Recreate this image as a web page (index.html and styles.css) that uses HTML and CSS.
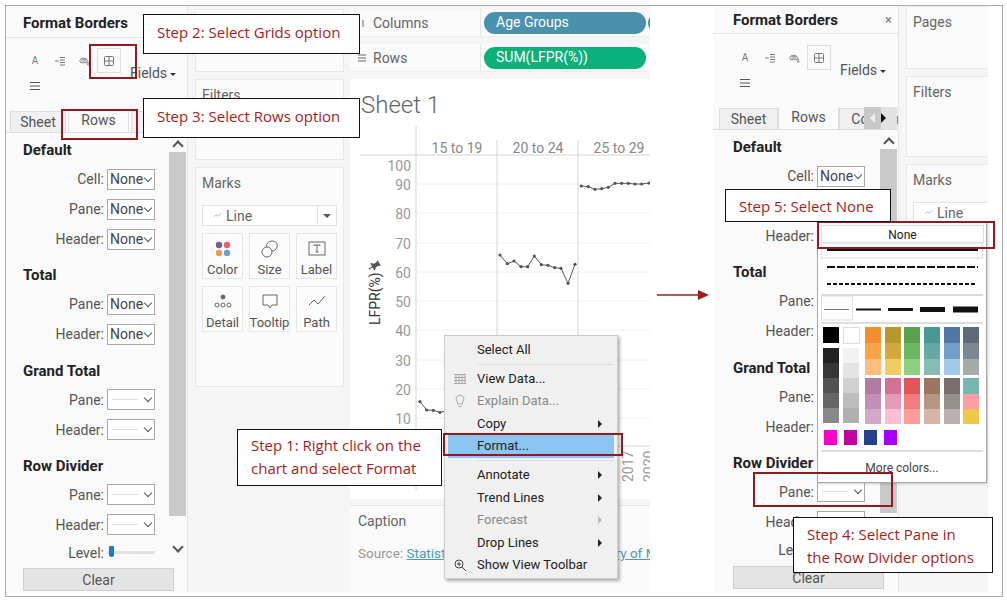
FILE: index.html
```html
<!DOCTYPE html>
<html lang="en">
<head>
  <meta charset="UTF-8">
  <meta name="viewport" content="width=device-width, initial-scale=1.0">
  <title>Format Borders steps</title>
  <link rel="stylesheet" href="styles.css">
</head>
<body>
  <div class="frame">

    <!-- left screenshot -->
    <div class="shot shot-left">
      <div class="fmt-panel">
        <div class="fmt-header"><h2>Format Borders</h2></div>
        <div class="fmt-tools">
          <span class="tool tool-a">A</span>
          <span class="tool"><svg viewBox="0 0 12 12"><path d="M1 6h4M6 2.500h5M6 5h5M6 7.500h5M6 10h5"></path></svg></span>
          <span class="tool"><svg viewBox="0 0 14 14"><path d="M2 6a5 4 0 0 1 9 0l1 3H3z"></path><path d="M4 5h6M4 7h6"></path><circle cx="12" cy="11" r="1"></circle></svg></span>
          <span class="tool tool-active"><svg viewBox="0 0 12 12"><rect x="1.500" y="1.500" width="9" height="9" rx="1"></rect><path d="M6 1.500v9M1.500 6h9"></path></svg></span>
          <span class="fields">Fields<i class="caret"></i></span>
          <span class="tool tool-lines"><svg viewBox="0 0 12 12"><path d="M1 2.500h10M1 6h10M1 9.500h10"></path></svg></span>
        </div>
        <div class="fmt-tabs">
          <span class="fmt-tab">Sheet</span>
          <span class="fmt-tab fmt-tab-active">Rows</span>
          <span class="fmt-tab fmt-tab-cols">Columns</span>
        </div>
        <div class="fmt-body">
          <div class="fmt-form">
            <h3>Default</h3>
            <div class="fmt-row"><label>Cell:</label><div class="sel">None</div></div>
            <div class="fmt-row"><label>Pane:</label><div class="sel">None</div></div>
            <div class="fmt-row"><label>Header:</label><div class="sel">None</div></div>
            <h3>Total</h3>
            <div class="fmt-row"><label>Pane:</label><div class="sel">None</div></div>
            <div class="fmt-row"><label>Header:</label><div class="sel">None</div></div>
            <h3>Grand Total</h3>
            <div class="fmt-row"><label>Pane:</label><div class="sel sel-line"></div></div>
            <div class="fmt-row"><label>Header:</label><div class="sel sel-line"></div></div>
            <h3>Row Divider</h3>
            <div class="fmt-row"><label>Pane:</label><div class="sel sel-line"></div></div>
            <div class="fmt-row"><label>Header:</label><div class="sel sel-line"></div></div>
            <div class="fmt-row fmt-row-level"><label>Level:</label><div class="slider"><i></i></div></div>
          </div>
          <div class="scrollbar">
            <span class="scroll-arrow scroll-up"></span>
            <div class="scroll-thumb"></div>
            <span class="scroll-arrow scroll-down"></span>
          </div>
        </div>
        <button class="clear-btn">Clear</button>
      </div>

      <div class="side">
        <div class="card card-pages"></div>
        <div class="card card-filters"><span class="card-title">Filters</span></div>
        <div class="card card-marks">
          <span class="card-title">Marks</span>
          <div class="marks-type">
            <svg viewBox="0 0 12 12"><path d="M1 8l3-3 3 2 4-4"></path></svg>Line<span class="marks-drop"><i></i></span>
          </div>
          <div class="marks-grid">
            <div class="mark-btn"><svg viewBox="0 0 20 20" class="dots"><circle cx="6" cy="6" r="3.200" fill="#6f5f96"></circle><circle cx="14" cy="6" r="3.200" fill="#e3636c"></circle><circle cx="6" cy="14" r="3.200" fill="#ef9b5a"></circle><circle cx="14" cy="14" r="3.200" fill="#6a9fd0"></circle></svg>Color</div>
            <div class="mark-btn"><svg viewBox="0 0 20 20"><circle cx="7" cy="13" r="5"></circle><path d="M6 8a6 6 0 0 1 6-6c4 0 6 3 5 6-1 3-3 4-5 4"></path></svg>Size</div>
            <div class="mark-btn"><svg viewBox="0 0 20 20"><rect x="2" y="3" width="16" height="13"></rect><path d="M7 7V6h6v1M10 6v7M8.500 13h3"></path></svg>Label</div>
            <div class="mark-btn"><svg viewBox="0 0 20 20"><circle cx="10" cy="5" r="2" fill="#666"></circle><circle cx="4" cy="13" r="2"></circle><circle cx="10" cy="13" r="2"></circle><circle cx="16" cy="13" r="2"></circle></svg>Detail</div>
            <div class="mark-btn"><svg viewBox="0 0 20 20"><path d="M3 3h14v10h-5l-2 3-2-3H3z"></path></svg>Tooltip</div>
            <div class="mark-btn"><svg viewBox="0 0 20 20"><path d="M2 13l5-5 4 4 7-8"></path></svg>Path</div>
          </div>
        </div>
      </div>

      <div class="main">
        <div class="shelf">
          <div class="shelf-label"><svg viewBox="0 0 10 10"><path d="M2.500 2v7M6 2v7"></path></svg>Columns</div>
          <span class="pill pill-dim">Age Groups</span><span class="pill pill-dim"></span>
        </div>
        <div class="shelf">
          <div class="shelf-label"><svg viewBox="0 0 10 10"><path d="M1 2h8M1 5h8M1 8h8"></path></svg>Rows</div>
          <span class="pill pill-measure">SUM(LFPR(%))</span>
        </div>
        <div class="sheet">
          <div class="sheet-title">Sheet 1</div>
          <svg class="chart" viewBox="350 126 300 373" width="300" height="373">
            <defs>
              <marker id="dot" viewBox="0 0 4 4" refX="2" refY="2" markerWidth="4" markerHeight="4" markerUnits="userSpaceOnUse">
                <circle cx="2" cy="2" r="1.600" fill="#555"></circle>
              </marker>
            </defs>
            <g class="grid-lines">
              <path d="M416 184H650M416 213H650M416 243H650M416 272H650M416 301H650M416 330H650M416 360H650M416 389H650M416 418H650"></path>
            </g>
            <g class="axis-lines">
              <path d="M360 155H650M416 126V490M497 140V446M578 140V446M416 446H650"></path>
            </g>
            <g class="col-text">
              <text x="457" y="153">15 to 19</text>
              <text x="538" y="153">20 to 24</text>
              <text x="619" y="153">25 to 29</text>
            </g>
            <g class="tick-text">
              <text x="411" y="171">100</text>
              <text x="411" y="190">90</text>
              <text x="411" y="219">80</text>
              <text x="411" y="249">70</text>
              <text x="411" y="278">60</text>
              <text x="411" y="307">50</text>
              <text x="411" y="336">40</text>
              <text x="411" y="366">30</text>
              <text x="411" y="395">20</text>
              <text x="411" y="424">10</text>
            </g>
            <text class="axis-title" transform="translate(380 325) rotate(-90)">LFPR(%)</text>
            <path class="pin" d="M371 260h6v1l-1 1v3l2 2v1h-3.500v4h-1v-4H370v-1l2-2v-3l-1-1z" transform="rotate(60 374 266)"></path>
            <g class="year-text">
              <text transform="translate(633 482) rotate(-90)">2017</text>
              <text transform="translate(654 482) rotate(-90)">2020</text>
            </g>
            <g class="series">
              <polyline points="420,401.700 426.700,410 433.300,410.300 440,412.300 447,411"></polyline>
              <polyline points="500,255 507.300,263.700 514,261 521,266.700 527.700,266.700 534.300,256 541.300,264.700 548,265.300 554.700,267.700 561,268.300 568,283.300 575,264.300"></polyline>
              <polyline points="581.300,186 588.300,186.700 595,189.300 601.700,188.700 608.300,187.300 615,183.300 621.700,183.300 628.300,183.300 635,184 641.700,184 649,183"></polyline>
            </g>
          </svg>
        </div>
        <div class="caption">
          <div class="caption-title">Caption</div>
          <div class="caption-text">Source: <a>Statistics Labor Department Ministry of Manpower</a></div>
        </div>
      </div>
    </div>

    <!-- right screenshot -->
    <div class="shot shot-right">
      <div class="fmt-panel">
        <div class="fmt-header"><h2>Format Borders</h2><span class="fmt-close">×</span></div>
        <div class="fmt-tools">
          <span class="tool tool-a">A</span>
          <span class="tool"><svg viewBox="0 0 12 12"><path d="M1 6h4M6 2.500h5M6 5h5M6 7.500h5M6 10h5"></path></svg></span>
          <span class="tool"><svg viewBox="0 0 14 14"><path d="M2 6a5 4 0 0 1 9 0l1 3H3z"></path><path d="M4 5h6M4 7h6"></path><circle cx="12" cy="11" r="1"></circle></svg></span>
          <span class="tool tool-active"><svg viewBox="0 0 12 12"><rect x="1.500" y="1.500" width="9" height="9" rx="1"></rect><path d="M6 1.500v9M1.500 6h9"></path></svg></span>
          <span class="fields">Fields<i class="caret"></i></span>
          <span class="tool tool-lines"><svg viewBox="0 0 12 12"><path d="M1 2.500h10M1 6h10M1 9.500h10"></path></svg></span>
        </div>
        <div class="fmt-tabs">
          <span class="fmt-tab">Sheet</span>
          <span class="fmt-tab fmt-tab-active">Rows</span>
          <span class="fmt-tab fmt-tab-cols">Columns</span>
          <span class="tab-scroller"><i class="tab-left"></i><i class="tab-right"></i></span>
        </div>
        <div class="fmt-body">
          <div class="fmt-form">
            <h3>Default</h3>
            <div class="fmt-row"><label>Cell:</label><div class="sel">None</div></div>
            <div class="fmt-row"><label>Pane:</label><div class="sel">None</div></div>
            <div class="fmt-row"><label>Header:</label><div class="sel">None</div></div>
            <h3>Total</h3>
            <div class="fmt-row"><label>Pane:</label><div class="sel">None</div></div>
            <div class="fmt-row"><label>Header:</label><div class="sel">None</div></div>
            <h3>Grand Total</h3>
            <div class="fmt-row"><label>Pane:</label><div class="sel sel-line"></div></div>
            <div class="fmt-row"><label>Header:</label><div class="sel sel-line"></div></div>
            <h3>Row Divider</h3>
            <div class="fmt-row"><label>Pane:</label><div class="sel sel-line"></div></div>
            <div class="fmt-row"><label>Header:</label><div class="sel sel-line"></div></div>
            <div class="fmt-row fmt-row-level"><label>Level:</label><div class="slider"><i></i></div></div>
          </div>
          <div class="scrollbar">
            <span class="scroll-arrow scroll-up"></span>
            <div class="scroll-thumb"></div>
            <span class="scroll-arrow scroll-down"></span>
          </div>
        </div>
        <button class="clear-btn">Clear</button>
      </div>

      <div class="side">
        <div class="card card-pages"><span class="card-title">Pages</span></div>
        <div class="card card-filters"><span class="card-title">Filters</span></div>
        <div class="card card-marks">
          <span class="card-title">Marks</span>
          <div class="marks-type">
            <svg viewBox="0 0 12 12"><path d="M1 8l3-3 3 2 4-4"></path></svg>Line
          </div>
        </div>
      </div>
    </div>

    <!-- line and colour popup on the right screenshot -->
    <div class="popup">
      <div class="popup-none">None</div>
      <svg class="popup-art" viewBox="817 243 169 209" width="169" height="209">
        <rect x="821.500" y="243" width="161" height="15" fill="#fff" stroke="#ddd"></rect>
        <path d="M827 250H978" stroke="#111" stroke-width="2"></path>
        <path d="M827 267H978" stroke="#111" stroke-width="2" stroke-dasharray="8 2"></path>
        <path d="M827 284H976" stroke="#111" stroke-width="2" stroke-dasharray="4 2"></path>
        <path d="M821 295H983M821 323H983M821 451H983" stroke="#bbb"></path>
        <rect x="821.500" y="296" width="31" height="24" fill="#fff" stroke="#ddd"></rect>
        <path d="M824 309.500H849" stroke="#777"></path>
        <path d="M856 309.500H881" stroke="#111" stroke-width="2"></path>
        <path d="M888 309.500H913" stroke="#111" stroke-width="3"></path>
        <path d="M920 309.500H945" stroke="#111" stroke-width="5"></path>
        <path d="M953 309.500H978" stroke="#111" stroke-width="6"></path>

        <rect x="823" y="327" width="16" height="16" fill="#000"></rect>
        <rect x="843.500" y="327.500" width="16" height="16" fill="#fff" stroke="#ddd"></rect>

        <rect x="823" y="348" width="16" height="15" fill="#222"></rect>
        <rect x="823" y="363" width="16" height="15" fill="#363636"></rect>
        <rect x="823" y="378" width="16" height="15" fill="#525252"></rect>
        <rect x="823" y="393" width="16" height="15" fill="#666"></rect>
        <rect x="823" y="408" width="16" height="15" fill="#888"></rect>
        <rect x="843" y="348" width="16" height="15" fill="#f2f2f2"></rect>
        <rect x="843" y="363" width="16" height="15" fill="#e3e3e3"></rect>
        <rect x="843" y="378" width="16" height="15" fill="#d0d0d0"></rect>
        <rect x="843" y="393" width="16" height="15" fill="#bdbdbd"></rect>
        <rect x="843" y="408" width="16" height="15" fill="#b0b0b0"></rect>

        <rect x="865" y="327" width="16" height="16" fill="#f28e2b"></rect>
        <rect x="865" y="343" width="16" height="16" fill="#f9a44a"></rect>
        <rect x="865" y="359" width="16" height="16" fill="#ffbe7d"></rect>
        <rect x="885" y="327" width="16" height="16" fill="#b6992d"></rect>
        <rect x="885" y="343" width="16" height="16" fill="#d1a93c"></rect>
        <rect x="885" y="359" width="16" height="16" fill="#f1ce63"></rect>
        <rect x="904" y="327" width="16" height="16" fill="#59a14f"></rect>
        <rect x="904" y="343" width="16" height="16" fill="#6cb663"></rect>
        <rect x="904" y="359" width="16" height="16" fill="#8cd17d"></rect>
        <rect x="924" y="327" width="16" height="16" fill="#499894"></rect>
        <rect x="924" y="343" width="16" height="16" fill="#64a9a4"></rect>
        <rect x="924" y="359" width="16" height="16" fill="#86bcb6"></rect>
        <rect x="944" y="327" width="16" height="16" fill="#4e79a7"></rect>
        <rect x="944" y="343" width="16" height="16" fill="#729fc8"></rect>
        <rect x="944" y="359" width="16" height="16" fill="#a0cbe8"></rect>
        <rect x="963" y="327" width="16" height="16" fill="#5d6b78"></rect>
        <rect x="963" y="343" width="16" height="16" fill="#7b8791"></rect>
        <rect x="963" y="359" width="16" height="16" fill="#a5aaab"></rect>

        <rect x="865" y="378" width="16" height="16" fill="#b07aa1"></rect>
        <rect x="865" y="394" width="16" height="15" fill="#c28fb8"></rect>
        <rect x="865" y="409" width="16" height="15" fill="#d4a6c8"></rect>
        <rect x="885" y="378" width="16" height="16" fill="#d37295"></rect>
        <rect x="885" y="394" width="16" height="15" fill="#e79ab4"></rect>
        <rect x="885" y="409" width="16" height="15" fill="#fabfd2"></rect>
        <rect x="904" y="378" width="16" height="16" fill="#e15759"></rect>
        <rect x="904" y="394" width="16" height="15" fill="#f47b7b"></rect>
        <rect x="904" y="409" width="16" height="15" fill="#ff9d9a"></rect>
        <rect x="924" y="378" width="16" height="16" fill="#9d7660"></rect>
        <rect x="924" y="394" width="16" height="15" fill="#b59583"></rect>
        <rect x="924" y="409" width="16" height="15" fill="#d7b5a6"></rect>
        <rect x="944" y="378" width="16" height="16" fill="#79706e"></rect>
        <rect x="944" y="394" width="16" height="15" fill="#95908c"></rect>
        <rect x="944" y="409" width="16" height="15" fill="#bab0ac"></rect>
        <rect x="963" y="378" width="16" height="16" fill="#76b7b2"></rect>
        <rect x="963" y="394" width="16" height="15" fill="#ff9da7"></rect>
        <rect x="963" y="409" width="16" height="15" fill="#edc948"></rect>

        <rect x="824" y="430" width="13" height="15" fill="#ff00c8"></rect>
        <rect x="844" y="430" width="13" height="15" fill="#c2009b"></rect>
        <rect x="864" y="430" width="13" height="15" fill="#27408b"></rect>
        <rect x="884" y="430" width="13" height="15" fill="#a800ff"></rect>
      </svg>
      <div class="popup-more">More colors...</div>
    </div>

    <!-- context menu on the chart -->
    <div class="menu">
      <div class="menu-item">Select All</div>
      <div class="menu-sep"></div>
      <div class="menu-item"><svg class="menu-icon" viewBox="0 0 14 12"><path d="M1 1.500h12M1 4.500h12M1 7.500h12M1 10.500h12M3 1v10M6 1v10M9 1v10M12 1v10"></path></svg>View Data...</div>
      <div class="menu-item menu-off"><svg class="menu-icon" viewBox="0 0 14 14"><path d="M7 1a4 4 0 0 0-2.500 7v2h5V8A4 4 0 0 0 7 1zM5.500 12.500h3"></path></svg>Explain Data...</div>
      <div class="menu-item menu-more">Copy</div>
      <div class="menu-item menu-hot">Format...</div>
      <div class="menu-sep"></div>
      <div class="menu-item menu-more">Annotate</div>
      <div class="menu-item menu-more">Trend Lines</div>
      <div class="menu-item menu-off menu-more">Forecast</div>
      <div class="menu-item menu-more">Drop Lines</div>
      <div class="menu-item"><svg class="menu-icon menu-icon-dark" viewBox="0 0 14 14"><circle cx="6" cy="6" r="4"></circle><path d="M9 9l4 4M4 6h4M6 4v4"></path></svg>Show View Toolbar</div>
    </div>

    <!-- red highlight boxes -->
    <div class="mark mark-grids"></div>
    <div class="mark mark-rows"></div>
    <div class="mark mark-format"></div>
    <div class="mark mark-none"></div>
    <div class="mark mark-pane"></div>

    <!-- step callouts -->
    <div class="callout step-2">Step 2: Select Grids option</div>
    <div class="callout step-3">Step 3: Select Rows option</div>
    <div class="callout step-1">Step 1: Right click on the<br>chart and select Format</div>
    <div class="callout step-5">Step 5: Select None</div>
    <div class="callout step-4">Step 4: Select Pane in<br>the Row Divider options</div>

    <svg class="next-arrow" viewBox="0 0 52 12"><path d="M0 6H42" stroke="#a01c1c" stroke-width="1.500"></path><path d="M41 1l11 5-11 5z" fill="#a01c1c"></path></svg>
  </div>
</body>
</html>
```

FILE: styles.css
```css
* {
  margin: 0;
  padding: 0;
  box-sizing: border-box;
}

body {
  font-family: Roboto, "Liberation Sans", sans-serif;
  font-size: 14px;
  color: #555;
  background: #fff;
}

.frame {
  position: relative;
  display: flex;
  align-items: flex-start;
  width: 998px;
  height: 592px;
  margin: 5px 0 0 5px;
  border: 1px solid #aaa;
  overflow: hidden;
}

.shot {
  display: flex;
  height: 586px;
  background: #f5f5f5;
  overflow: hidden;
}

.shot-left {
  width: 644px;
}

.shot-right {
  width: 275px;
  margin-left: 63px;
}

/* format panel */
.fmt-panel {
  flex: none;
  width: 182px;
  height: 100%;
  background: #fafafa;
  border-right: 1px solid #e6e6e6;
}

.shot-right .fmt-panel {
  width: 186px;
}

.fmt-header {
  display: flex;
  align-items: center;
  justify-content: space-between;
  height: 32px;
  padding: 2px 6px 0 17px;
  border-bottom: 1px solid #e6e6e6;
}

.shot-right .fmt-header {
  height: 28px;
  padding-left: 20px;
  padding-top: 0;
}

.fmt-header h2 {
  font-size: 15px;
  font-weight: 700;
  color: #222;
}

.fmt-close {
  font-size: 13px;
  color: #777;
}

.fmt-tools {
  display: grid;
  grid-template-columns: repeat(4, 24.5px) auto;
  grid-template-rows: 25px 25px;
  justify-content: start;
  height: 72px;
  padding: 10px 0 0 17px;
}

.shot-right .fmt-tools {
  height: 73px;
  padding: 11px 0 0 20px;
}

.tool {
  display: flex;
  align-items: center;
  justify-content: center;
  width: 24px;
  height: 25px;
}

.tool svg {
  width: 12px;
  height: 12px;
  fill: none;
  stroke: #777;
  stroke-width: 1;
}

.tool-a {
  font-size: 10px;
  color: #777;
}

.tool-active {
  border: 1px solid #ddd;
}

.tool-lines {
  grid-row: 2;
  grid-column: 1;
}

.tool-lines svg {
  stroke: #555;
}

.fields {
  grid-row: 1 / 3;
  grid-column: 5;
  align-self: center;
  margin-left: 9px;
  color: #555;
  white-space: nowrap;
}

.caret {
  display: inline-block;
  margin-left: 3px;
  vertical-align: 2px;
  border: 3px solid transparent;
  border-top: 3px solid #333;
  border-bottom: 0;
}

.fmt-tabs {
  position: relative;
  display: flex;
  align-items: flex-end;
  height: 23px;
  padding-left: 4px;
  border-bottom: 1px solid #ddd;
  overflow: hidden;
}

.shot-right .fmt-tabs {
  padding-left: 6px;
}

.fmt-tab {
  flex: none;
  width: 56px;
  height: 21px;
  margin-right: 2px;
  text-align: center;
  line-height: 21px;
  background: #f0f0f0;
  border: 1px solid #ddd;
  border-bottom: 0;
}

.shot-right .fmt-tab {
  width: 59px;
  margin-right: 0;
}

.fmt-tab-active,
.shot-right .fmt-tab-active {
  width: 61px;
  height: 23px;
  line-height: 21px;
  background: #fafafa;
  border-bottom: 1px solid #fafafa;
}

.fmt-tab-cols,
.shot-right .fmt-tab-cols {
  width: 80px;
}

.tab-scroller {
  position: absolute;
  right: 1px;
  top: 0;
  display: flex;
  width: 33px;
  height: 22px;
  background: linear-gradient(to right, #c8c8c8 17px, #e2e2e2 17px);
}

.tab-scroller i {
  width: 0;
  height: 0;
  margin: 6px 0 0 6px;
  border: 5px solid transparent;
}

.tab-left {
  border-right-color: #eee !important;
  border-left-width: 0 !important;
}

.tab-right {
  border-left-color: #111 !important;
  border-right-width: 0 !important;
}

.fmt-body {
  display: flex;
  justify-content: space-between;
  height: 425px;
  padding: 2px 0 0 17px;
}

.shot-right .fmt-body {
  padding-left: 20px;
}

.fmt-form {
  padding-top: 5px;
}

.fmt-form h3 {
  height: 20px;
  margin: 11.250px 0 4px;
  font-size: 15px;
  font-weight: 700;
  line-height: 20px;
  color: #222;
}

.fmt-form h3:first-child {
  margin-top: 0;
}

.fmt-row {
  display: flex;
  align-items: center;
  gap: 3px;
  height: 30px;
}

.fmt-row label {
  width: 81px;
  text-align: right;
}

.fmt-row-level {
  height: 26px;
}

.sel {
  position: relative;
  width: 48px;
  height: 21px;
  padding-left: 2px;
  line-height: 19px;
  color: #444;
  background: #fff;
  border: 1px solid #a9a9a9;
}

.sel::after {
  content: "";
  position: absolute;
  right: 3px;
  top: 5px;
  width: 5px;
  height: 5px;
  border-right: 1px solid #555;
  border-bottom: 1px solid #555;
  transform: rotate(45deg);
}

.sel-line::before {
  content: "";
  position: absolute;
  left: 4px;
  top: 9px;
  width: 26px;
  border-top: 1px solid #ddd;
}

.slider {
  position: relative;
  width: 48px;
  height: 3px;
  background: #e2e2e2;
}

.slider i {
  position: absolute;
  left: 2px;
  top: -5px;
  width: 5px;
  height: 11px;
  border-radius: 1px 1px 3px 3px;
  background: #1a78d2;
}

.scrollbar {
  display: flex;
  flex-direction: column;
  flex: none;
  width: 17px;
  height: 423px;
  margin-right: 1px;
}

.scroll-arrow {
  flex: none;
  display: block;
  position: relative;
  height: 17px;
}

.scroll-arrow::after {
  content: "";
  position: absolute;
  left: 5px;
  width: 6px;
  height: 6px;
  border-left: 2px solid #555;
  border-top: 2px solid #555;
}

.scroll-up::after {
  top: 7px;
  transform: rotate(45deg);
}

.scroll-down {
  margin-top: auto;
}

.scroll-down::after {
  top: 2px;
  transform: rotate(225deg);
}

.scroll-thumb {
  height: 364px;
  background: #c9c9c9;
}

.clear-btn {
  display: block;
  width: 151px;
  height: 23px;
  margin: 10px 0 0 17px;
  font: inherit;
  color: #555;
  background: #e4e4e4;
  border: 1px solid #cfcfcf;
}

.shot-right .clear-btn {
  margin: 11px 0 0 20px;
}

/* shelf cards */
.side {
  flex: none;
  width: 149px;
  margin: 3px 0 0 7px;
}

.shot-right .side {
  width: 90px;
  margin-top: 0;
}

.card {
  background: #fafafa;
  border: 1px solid #e8e8e8;
  margin-bottom: 7px;
  padding: 6px 6px;
}

.card-title {
  display: block;
  line-height: 18px;
  color: #666;
}

.card-pages {
  height: 63px;
}

.card-filters {
  height: 81px;
}

.card-marks {
  height: 220px;
}

.marks-type {
  display: flex;
  align-items: center;
  position: relative;
  height: 21px;
  margin-top: 13px;
  padding-left: 10px;
  color: #666;
  background: #fff;
  border: 1px solid #e2e2e2;
  overflow: hidden;
}

.marks-type svg {
  width: 9px;
  height: 9px;
  margin-right: 4px;
  fill: none;
  stroke: #aaa;
}

.marks-drop {
  position: absolute;
  right: 0;
  top: 0;
  bottom: 0;
  width: 19px;
  border-left: 1px solid #e2e2e2;
}

.marks-drop i {
  position: absolute;
  left: 5px;
  top: 8px;
  border: 4px solid transparent;
  border-top: 4px solid #555;
  border-bottom: 0;
}

.marks-grid {
  display: grid;
  grid-template-columns: repeat(3, 41px);
  grid-auto-rows: 46px;
  gap: 7px 6px;
  margin-top: 7px;
}

.mark-btn {
  display: flex;
  flex-direction: column;
  align-items: center;
  font-size: 13px;
  line-height: 16px;
  color: #555;
  background: #fcfcfc;
  border: 1px solid #e6e6e6;
}

.mark-btn svg {
  width: 20px;
  height: 20px;
  margin: 5px 0 3px;
  fill: none;
  stroke: #666;
  stroke-width: 1;
}

.mark-btn svg.dots {
  stroke: none;
}

/* main view */
.main {
  flex: none;
  width: 300px;
  margin-left: 6px;
  overflow: hidden;
}

.shelf {
  display: flex;
  align-items: center;
  gap: 2px;
  height: 28px;
  margin-top: 3px;
  margin-bottom: 7px;
  background: #fafafa;
  border-bottom: 1px solid #eee;
}

.shelf-label {
  display: flex;
  align-items: center;
  flex: none;
  width: 131px;
  height: 100%;
  padding-left: 7px;
  color: #666;
  border-right: 1px solid #e6e6e6;
}

.shelf-label svg {
  width: 10px;
  height: 10px;
  margin-right: 6px;
  fill: none;
  stroke: #666;
}

.pill {
  flex: none;
  width: 162px;
  height: 22px;
  padding-left: 12px;
  line-height: 21px;
  color: #fff;
  border-radius: 11px;
}

.pill:first-of-type {
  margin-left: 1px;
}

.pill-dim {
  background: #4a91ae;
}

.pill-measure {
  background: #0bb07a;
}

.sheet {
  height: 420px;
  background: #fff;
}

.sheet-title {
  height: 47px;
  padding: 11px 0 0 11px;
  font-size: 24px;
  font-weight: 300;
  line-height: 30px;
  color: #666;
}

.chart {
  display: block;
}

.grid-lines path {
  stroke: #f0f0f0;
  fill: none;
}

.axis-lines path {
  stroke: #d4d4d4;
  fill: none;
}

.col-text text {
  font-size: 14px;
  fill: #888;
  text-anchor: middle;
}

.tick-text text {
  font-size: 14px;
  fill: #999;
  text-anchor: end;
}

.year-text text {
  font-size: 14px;
  fill: #999;
}

.axis-title {
  font-size: 14px;
  fill: #333;
}

.pin {
  fill: #555;
}

.series polyline {
  fill: none;
  stroke: #555;
  stroke-width: 1;
  marker-start: url(#dot);
  marker-mid: url(#dot);
  marker-end: url(#dot);
}

.caption {
  height: 87px;
  margin-top: 6px;
  padding: 7px 8px 0;
  background: #fafafa;
  border-top: 1px solid #e8e8e8;
  white-space: nowrap;
}

.caption-title {
  line-height: 16px;
  color: #666;
}

.caption-text {
  margin-top: 16px;
  color: #999;
  font-size: 13.500px;
}

.caption-text a {
  color: #4a9cb4;
  text-decoration: underline;
}

/* popup over the right panel */
.popup {
  position: absolute;
  left: 811px;
  top: 216px;
  width: 170px;
  height: 261px;
  background: #fff;
  border: 1px solid #aaa;
  box-shadow: 1px 1px 2px rgba(0, 0, 0, 0.2);
}

.popup-none {
  height: 18px;
  margin: 2px 2px 0 3px;
  font-size: 12px;
  line-height: 18px;
  text-align: center;
  color: #222;
  border: 1px solid #ddd;
}

.popup-art {
  display: block;
  margin-left: -1px;
}

.popup-more {
  margin-top: 9px;
  font-size: 12px;
  text-align: center;
  color: #444;
}

/* context menu */
.menu {
  position: absolute;
  left: 438px;
  top: 329px;
  width: 174px;
  height: 244px;
  padding: 3px;
  color: #222;
  font-size: 13px;
  background: #f0f0f0;
  border: 1px solid #ccc;
  box-shadow: 2px 2px 3px rgba(0, 0, 0, 0.3);
}

.menu-item {
  position: relative;
  height: 22.600px;
  padding-left: 29px;
  line-height: 22px;
}

.menu-off {
  color: #888;
}

.menu-hot {
  background: #8cc4f2;
}

.menu-sep {
  height: 1px;
  margin: 2.500px 0 2.500px 29px;
  background: #ddd;
}

.menu-icon {
  position: absolute;
  left: 5px;
  top: 4px;
  width: 14px;
  height: 14px;
  fill: none;
  stroke: #aaa;
}

.menu-icon-dark {
  stroke: #444;
}

.menu-more::after {
  content: "";
  position: absolute;
  right: 12px;
  top: 7px;
  border: 4px solid transparent;
  border-left: 4px solid #222;
  border-right: 0;
}

.menu-off.menu-more::after {
  border-left-color: #bbb;
}

/* annotation layer: page position minus the frame's 6px */
.mark {
  position: absolute;
  border: 2px solid #8f1a1f;
}

.mark-grids {
  left: 83px;
  top: 38px;
  width: 48px;
  height: 35px;
}

.mark-rows {
  left: 55px;
  top: 103px;
  width: 77px;
  height: 31px;
}

.mark-format {
  left: 437px;
  top: 427px;
  width: 180px;
  height: 23px;
}

.mark-none {
  left: 811px;
  top: 215px;
  width: 178px;
  height: 28px;
}

.mark-pane {
  left: 747px;
  top: 466px;
  width: 140px;
  height: 35px;
}

.callout {
  position: absolute;
  padding-left: 13px;
  font-family: "Open Sans", "Liberation Sans", sans-serif;
  font-size: 15px;
  line-height: 23px;
  color: #a81c1c;
  background: #fff;
  border: 1px solid #111;
}

.step-2,
.step-3 {
  left: 137px;
  width: 217px;
  height: 40px;
  line-height: 34px;
}

.step-2 {
  top: 8px;
}

.step-3 {
  top: 92px;
}

.step-1 {
  left: 231px;
  top: 423px;
  width: 205px;
  height: 57px;
  padding-top: 4px;
}

.step-5 {
  left: 719px;
  top: 183px;
  width: 166px;
  height: 33px;
  line-height: 32px;
}

.step-4 {
  left: 787px;
  top: 511px;
  width: 200px;
  height: 56px;
  padding-top: 5px;
}

.next-arrow {
  position: absolute;
  left: 651px;
  top: 283px;
  width: 52px;
  height: 12px;
}
```
